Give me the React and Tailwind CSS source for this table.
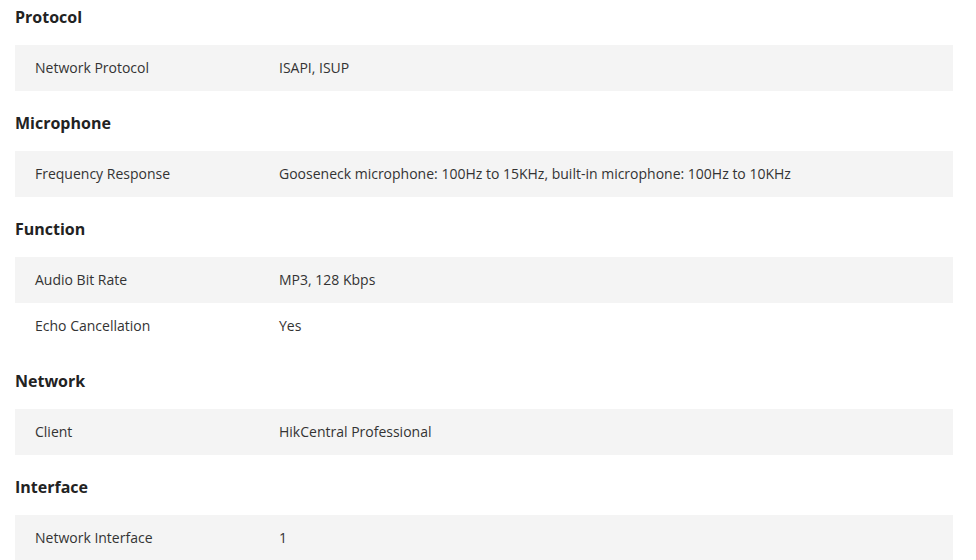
export default function App() {
  const sections = [
    { title: "Protocol", rows: [["Network Protocol", "ISAPI, ISUP"]] },
    {
      title: "Microphone",
      rows: [["Frequency Response", "Gooseneck microphone: 100Hz to 15KHz, built-in microphone: 100Hz to 10KHz"]],
    },
    { title: "Function", rows: [["Audio Bit Rate", "MP3, 128 Kbps"], ["Echo Cancellation", "Yes"]] },
    { title: "Network", rows: [["Client", "HikCentral Professional"]] },
    { title: "Interface", rows: [["Network Interface", "1"]] },
  ];
  return (
    <div className="w-[976px] h-[560px] overflow-hidden bg-white pl-[15px] pr-[23px] text-[#333333]" style={{ fontFamily: '"Open Sans", sans-serif' }}>
      {sections.map((s, i) => (
        <div key={s.title} className={i === 0 ? "" : "mt-[15px]"}>
          <div className="text-[16px] font-bold leading-[34px] mb-[11px] text-[#222222]">{s.title}</div>
          {s.rows.map((r, j) => (
            <div key={r[0]} className={`flex items-center h-[46px] pl-5 pb-[2px] text-[14px] ${j % 2 === 0 ? "bg-[#f4f4f4]" : "bg-white"}`}>
              <div className="w-[244px] shrink-0">{r[0]}</div>
              <div>{r[1]}</div>
            </div>
          ))}
        </div>
      ))}
    </div>
  );
}
